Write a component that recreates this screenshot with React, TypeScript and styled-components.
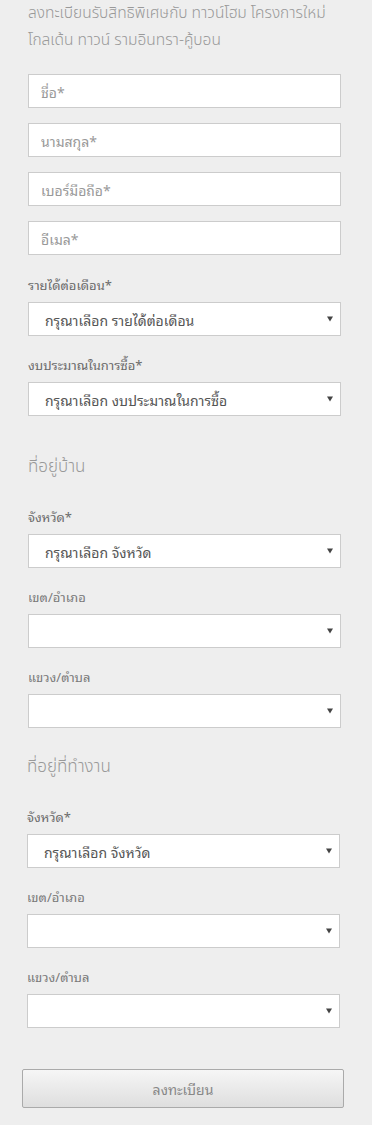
import React from 'react';
import styled, { createGlobalStyle } from 'styled-components';

const GlobalStyle = createGlobalStyle`
  html, body {
    margin: 0;
    padding: 0;
    background: #eeeeee;
  }
  * {
    box-sizing: border-box;
  }
`;

const fontStack = `"Noto Sans Thai Looped", "Noto Sans Thai", Tahoma, "Noto Sans", "DejaVu Sans", sans-serif`;
const headingFont = `"Noto Sans Thai", "Noto Sans", "DejaVu Sans", sans-serif`;

const Page = styled.div`
  width: 372px;
  min-height: 1125px;
  padding: 0 31px 17px 28px;
  font-family: ${fontStack};
  display: flex;
  flex-direction: column;
`;

const Title = styled.h1`
  margin: 0 0 20px;
  font-family: ${headingFont};
  font-size: 15.5px;
  line-height: 27px;
  font-weight: 300;
  white-space: nowrap;
  color: #999999;
`;

const TextInput = styled.input`
  display: block;
  width: 100%;
  height: 34px;
  margin: 0 0 15px;
  padding: 0 12px;
  border: 1px solid #cccccc;
  background: #ffffff;
  font-family: ${fontStack};
  font-size: 14px;
  color: #555555;
  outline: none;

  &::placeholder {
    color: #999999;
  }
`;

const Field = styled.div`
  display: flex;
  flex-direction: column;
  margin-bottom: 19px;
`;

const Label = styled.label<{ $strong?: boolean }>`
  font-size: 13px;
  line-height: 20px;
  color: ${p => (p.$strong ? '#6a6a6a' : '#7a7a7a')};
  font-weight: 400;
  margin-bottom: 7px;
`;

const SelectWrap = styled.div`
  position: relative;
  height: 34px;
`;

const Select = styled.select`
  width: 100%;
  height: 34px;
  padding: 0 28px 0 16px;
  border: 1px solid #cccccc;
  border-radius: 0;
  background: #ffffff;
  appearance: none;
  -webkit-appearance: none;
  font-family: ${fontStack};
  font-size: 14px;
  color: #555555;
  outline: none;
`;

const Arrow = styled.svg`
  position: absolute;
  right: 8px;
  top: 14px;
  width: 6px;
  height: 6px;
  pointer-events: none;
`;

const SectionHeading = styled.h2<{ $top: number }>`
  margin: ${p => p.$top}px 0 28px;
  font-family: ${headingFont};
  font-size: 17px;
  line-height: 24px;
  font-weight: 300;
  color: #999999;
`;

const Section = styled.div<{ $shift?: number }>`
  margin-left: ${p => p.$shift ?? 0}px;
  margin-right: ${p => -(p.$shift ?? 0)}px;
`;

const SubmitButton = styled.button`
  height: 39px;
  margin: 22px -3px 0 -6px;
  border: 1px solid #aaaaaa;
  border-radius: 2px;
  background: linear-gradient(to bottom, #f6f6f6 0%, #dedede 100%);
  font-family: ${fontStack};
  font-size: 14px;
  color: #888888;
  cursor: pointer;
`;

interface SelectFieldProps {
  label: string;
  placeholder?: string;
  strong?: boolean;
}

const SelectField: React.FC<SelectFieldProps> = ({ label, placeholder, strong }) => (
  <Field>
    <Label $strong={strong}>{label}</Label>
    <SelectWrap>
      <Select defaultValue="">
        <option value="">{placeholder ?? ''}</option>
      </Select>
      <Arrow viewBox="0 0 6 6">
        <path d="M0 0.5 H6 L3 5.5 Z" fill="#444444" />
      </Arrow>
    </SelectWrap>
  </Field>
);

interface AddressProps {
  heading: string;
  top: number;
  shift?: number;
}

const AddressSection: React.FC<AddressProps> = ({ heading, top, shift }) => (
  <Section $shift={shift}>
    <SectionHeading $top={top}>{heading}</SectionHeading>
    <SelectField label="จังหวัด*" placeholder="กรุณาเลือก จังหวัด" strong />
    <SelectField label="เขต/อำเภอ" />
    <SelectField label="แขวง/ตำบล" />
  </Section>
);

const App: React.FC = () => (
  <>
    <GlobalStyle />
    <Page>
      <Title>
        ลงทะเบียนรับสิทธิพิเศษกับ ทาวน์โฮม โครงการใหม่
        <br />
        โกลเด้น ทาวน์ รามอินทรา-คู้บอน
      </Title>
      <TextInput placeholder="ชื่อ*" />
      <TextInput placeholder="นามสกุล*" />
      <TextInput placeholder="เบอร์มือถือ*" />
      <TextInput placeholder="อีเมล*" style={{ marginBottom: 20 }} />
      <SelectField label="รายได้ต่อเดือน*" placeholder="กรุณาเลือก รายได้ต่อเดือน" strong />
      <SelectField label="งบประมาณในการซื้อ*" placeholder="กรุณาเลือก งบประมาณในการซื้อ" strong />
      <AddressSection heading="ที่อยู่บ้าน" top={20} />
      <AddressSection heading="ที่อยู่ที่ทำงาน" top={8} shift={-1} />
      <SubmitButton type="button">ลงทะเบียน</SubmitButton>
    </Page>
  </>
);

export default App;
